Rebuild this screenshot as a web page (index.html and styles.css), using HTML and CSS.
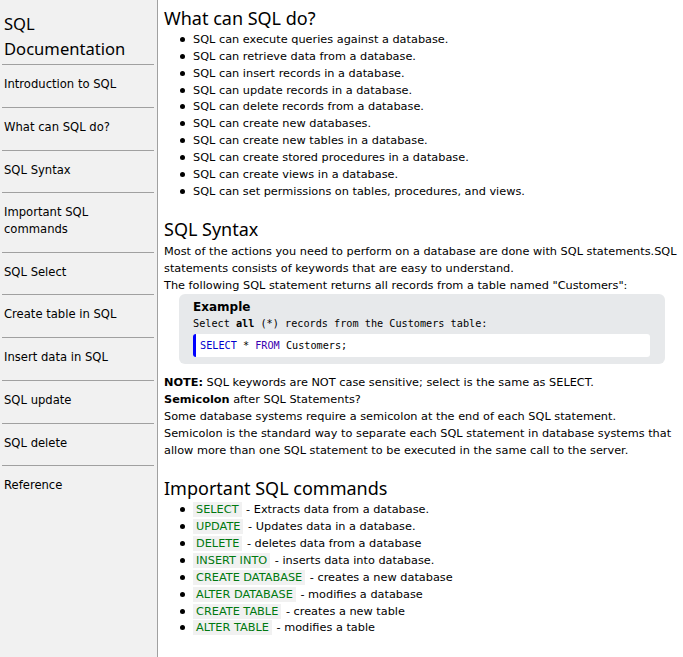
FILE: index.html
```html
<!DOCTYPE html>
<html>
<head>
<meta charset="utf-8">
<link rel="stylesheet" href="styles.css">
</head>
<body>
<div class="page">
  <nav class="sidebar">
    <div class="brand">SQL Documentation</div>
    <a class="nav-item" href="#">Introduction to SQL</a>
    <a class="nav-item" href="#">What can SQL do?</a>
    <a class="nav-item" href="#">SQL Syntax</a>
    <a class="nav-item" href="#">Important SQL commands</a>
    <a class="nav-item" href="#">SQL Select</a>
    <a class="nav-item" href="#">Create table in SQL</a>
    <a class="nav-item" href="#">Insert data in SQL</a>
    <a class="nav-item" href="#">SQL update</a>
    <a class="nav-item" href="#">SQL delete</a>
    <a class="nav-item last" href="#">Reference</a>
  </nav>
  <main class="main">
    <section class="section">
      <h2 class="heading">What can SQL do?</h2>
      <ul class="list">
        <li>SQL can execute queries against a database.</li>
        <li>SQL can retrieve data from a database.</li>
        <li>SQL can insert records in a database.</li>
        <li>SQL can update records in a database.</li>
        <li>SQL can delete records from a database.</li>
        <li>SQL can create new databases.</li>
        <li>SQL can create new tables in a database.</li>
        <li>SQL can create stored procedures in a database.</li>
        <li>SQL can create views in a database.</li>
        <li>SQL can set permissions on tables, procedures, and views.</li>
      </ul>
    </section>
    <section class="section">
      <h2 class="heading">SQL Syntax</h2>
      <p class="text">Most of the actions you need to perform on a database are done with SQL statements.SQL statements consists of keywords that are easy to understand.<br>The following SQL statement returns all records from a table named "Customers":</p>
      <div class="example">
        <div class="example-title">Example</div>
        <div class="example-desc">Select <b>all</b> (*) records from the Customers table:</div>
        <div class="code"><span class="kw">SELECT</span> * <span class="kw2">FROM</span> Customers;</div>
      </div>
      <p class="text"><b>NOTE:</b> SQL keywords are NOT case sensitive; select is the same as SELECT.<br><b>Semicolon</b> after SQL Statements?<br>Some database systems require a semicolon at the end of each SQL statement.<br>Semicolon is the standard way to separate each SQL statement in database systems that allow more than one SQL statement to be executed in the same call to the server.</p>
    </section>
    <section class="section">
      <h2 class="heading">Important SQL commands</h2>
      <ul class="list">
        <li><code class="cmd">SELECT</code> - Extracts data from a database.</li>
        <li><code class="cmd">UPDATE</code> - Updates data in a database.</li>
        <li><code class="cmd">DELETE</code> - deletes data from a database</li>
        <li><code class="cmd">INSERT INTO</code> - inserts data into database.</li>
        <li><code class="cmd">CREATE DATABASE</code> - creates a new database</li>
        <li><code class="cmd">ALTER DATABASE</code> - modifies a database</li>
        <li><code class="cmd">CREATE TABLE</code> - creates a new table</li>
        <li><code class="cmd">ALTER TABLE</code> - modifies a table</li>
      </ul>
    </section>
  </main>
</div>
</body>
</html>
```
FILE: styles.css
```css
html, body {
  margin: 0;
  padding: 0;
  height: 100%;
}
body {
  font-family: "DejaVu Sans", Verdana, sans-serif;
  font-size: 11.3px;
  color: #000;
  background: #fff;
}
.page {
  display: flex;
  min-height: 657px;
}
.sidebar {
  width: 158px;
  flex: 0 0 158px;
  background: #f1f1f1;
  border-right: 1px solid #a0a0a0;
  display: flex;
  flex-direction: column;
  padding: 0 3px 0 2px;
  box-sizing: border-box;
}
.brand {
  font-family: "Noto Sans", "Open Sans", sans-serif;
  font-size: 16.6px;
  line-height: 25px;
  padding: 11px 2px 3px;
  border-bottom: 1px solid #a0a0a0;
}
.nav-item {
  display: block;
  color: #000;
  font-size: 11.6px;
  text-decoration: none;
  line-height: 16.5px;
  padding: 11px 2px 14.25px;
  border-bottom: 1px solid #a0a0a0;
}
.nav-item.last {
  border-bottom: none;
}
.main {
  flex: 1;
  padding: 0 2px 0 6px;
  min-width: 0;
}
.heading {
  font-family: "Noto Sans", "Open Sans", sans-serif;
  font-weight: normal;
  font-size: 18px;
  line-height: 24px;
  margin: 6px 0 2px;
}
.section + .section .heading {
  margin-top: 17px;
}
.list {
  margin: 0;
  padding-left: 29px;
  line-height: 16.85px;
  list-style: none;
}
.list li::before {
  content: "";
  display: inline-block;
  width: 5px;
  height: 5px;
  border-radius: 50%;
  background: #000;
  margin-left: -13px;
  margin-right: 8px;
  vertical-align: 1px;
}
.text {
  margin: 0;
  line-height: 17px;
}
.example {
  background: #e7e9eb;
  border-radius: 6px;
  margin: 0 16px 10px 15px;
  padding: 6px 15px 7px 14px;
}
.example-title {
  font-weight: bold;
  font-size: 12px;
  line-height: 15px;
}
.example-desc {
  font-family: "DejaVu Sans Mono", "Liberation Mono", monospace;
  font-size: 10.2px;
  line-height: 17px;
}
.code {
  background: #fff;
  border-left: 3px solid #0000ff;
  border-radius: 3px;
  margin-top: 2px;
  padding: 3px 4px;
  font-family: "DejaVu Sans Mono", "Liberation Mono", monospace;
  font-size: 10.2px;
  line-height: 17px;
}
.kw { color: #0000cd; }
.kw2 { color: #3a00b0; }
.cmd {
  font-family: "DejaVu Sans", Verdana, sans-serif;
  font-size: 11.3px;
  color: #00790f;
  background: #f1f1f1;
  padding: 1px 3px;
  margin-right: 1px;
}
```
